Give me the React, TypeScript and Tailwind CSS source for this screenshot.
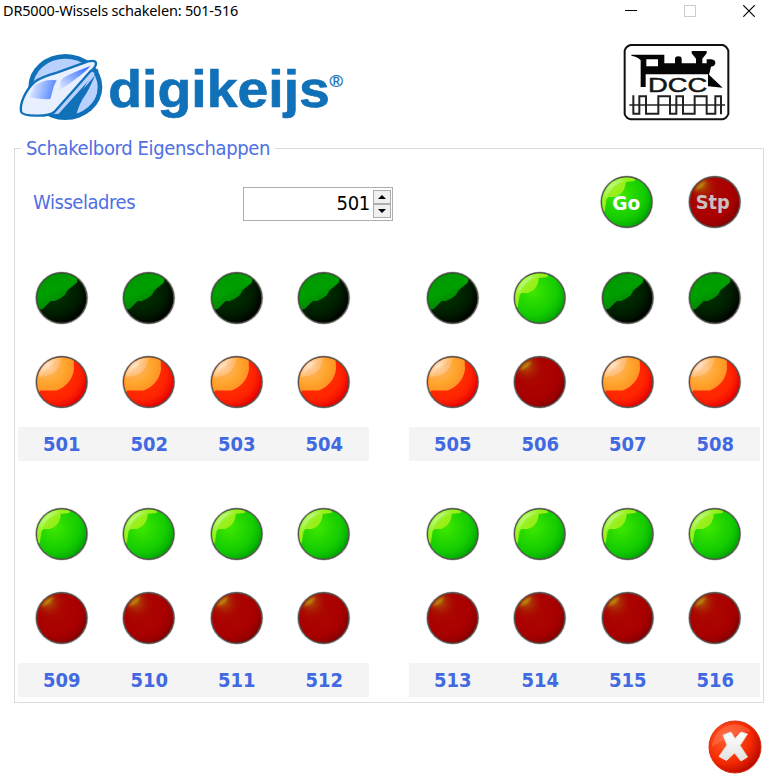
import React from "react";

type LampKind = "darkGreen" | "orange" | "green" | "red";

const base: Record<LampKind, [string, string, string]> = {
  darkGreen: ["#003a00", "#001c00", "#000000"],
  orange: ["#ff3a00", "#ff2400", "#e80000"],
  green: ["#3fe800", "#14cc00", "#00a800"],
  red: ["#ac0800", "#a80000", "#8c0000"],
};

function Lamp({ kind, label }: { kind: LampKind; label?: string }) {
  const id = React.useId();
  const [a, b, c] = base[kind];
  return (
    <svg width="54" height="54" viewBox="0.3 0 54 54" className="block shrink-0">
      <defs>
        <radialGradient id={id + "b"} cx="0.36" cy="0.36" r="0.72">
          <stop offset="0" stopColor={a} />
          <stop offset="0.68" stopColor={b} />
          <stop offset="1" stopColor={c} />
        </radialGradient>
        <clipPath id={id + "c"}>
          <circle cx="27" cy="27" r="24.6" />
        </clipPath>
        <radialGradient id={id + "o"} gradientUnits="userSpaceOnUse" cx="13" cy="11" r="30">
          <stop offset="0" stopColor="#ffd0a0" />
          <stop offset="0.3" stopColor="#ffb050" />
          <stop offset="0.6" stopColor="#ffa52c" />
          <stop offset="1" stopColor="#ff8a22" />
        </radialGradient>
        <linearGradient id={id + "d"} x1="0.2" y1="0" x2="0.7" y2="1">
          <stop offset="0" stopColor="#009400" />
          <stop offset="0.5" stopColor="#00a000" />
          <stop offset="1" stopColor="#007800" />
        </linearGradient>
        <linearGradient id={id + "g"} x1="0" y1="0" x2="1" y2="1">
          <stop offset="0" stopColor="#a8f860" />
          <stop offset="0.45" stopColor="#98f018" />
          <stop offset="1" stopColor="#7cee08" />
        </linearGradient>
        <radialGradient id={id + "r"} gradientUnits="userSpaceOnUse" cx="14" cy="11" r="18">
          <stop offset="0" stopColor="#b05c08" />
          <stop offset="1" stopColor="#a80000" stopOpacity="0" />
        </radialGradient>
        <filter id={id + "s"} x="-50%" y="-50%" width="200%" height="200%">
          <feGaussianBlur stdDeviation="0.9" />
        </filter>
      </defs>
      <circle cx="27" cy="27" r="26.6" fill="#999" opacity="0.6" />
      <circle cx="27" cy="27" r="25.9" fill="#54524e" />
      <circle cx="27" cy="27" r="24.6" fill={`url(#${id}b)`} />
      <g clipPath={`url(#${id}c)`}>
        {kind === "darkGreen" && (
          <path d="M0 39 L7.7 38.3 L12 34 L16 30 L20 30 L25 27.7 L30 24.3 L33 19 L37 16 L42.7 11 L42 0 H0Z" fill={`url(#${id}d)`} />
        )}
        {kind === "orange" && (
          <>
            <path d="M3 38 L6 35.6 H22 C31 32 38 25 39.3 14 L39 5 L30 0 H0 V38Z" fill={`url(#${id}o)`} />
            <path d="M5 22 Q15 21 20 17 Q24 14 27 3 H12 L3 13Z" fill="#ffe0cc" opacity="0.3" />
            <path d="M5 23 C6 14 13 6 23 4.5 C16 8 9 14 5 23Z" fill="#fff" opacity="0.6" filter={`url(#${id}s)`} />
          </>
        )}
        {kind === "green" && (
          <>
            <path d="M2 38 L5 36 L7 24 L9 22 H15 C22 20 26 14 26 7 L35 6 L35 0 H0Z" fill={`url(#${id}g)`} />
            <path d="M4.5 25 C6 13 14 5 26 4.5 C16 7 8 14 4.5 25Z" fill="#dfffdf" opacity="0.8" filter={`url(#${id}s)`} />
          </>
        )}
        {kind === "red" && (
          <>
            <circle cx="14" cy="11" r="18" fill={`url(#${id}r)`} />
            <path d="M7 16 Q11 8 19 6 Q16 12 7 16Z" fill="#b88c10" filter={`url(#${id}s)`} />
          </>
        )}
        <path d="M50 19 A24 24 0 0 1 21 50.5 A26 26 0 0 0 50 19Z" fill={kind === "darkGreen" ? "#000" : kind === "green" ? "#008c00" : kind === "red" ? "#6c0000" : "#c40000"} opacity="0.45" filter={`url(#${id}s)`} />
      </g>
      {label && (
        <text
          x={label === "Go" ? 26.6 : 25}
          y={label === "Go" ? 34.5 : 33.5}
          textAnchor="middle"
          fontFamily="'DejaVu Sans Condensed','DejaVu Sans',sans-serif"
          fontWeight="700"
          fontStretch="condensed"
          fontSize="20"
          textLength={label === "Go" ? 28 : 34}
          lengthAdjust="spacingAndGlyphs"
          fill={label === "Go" ? "#ffffff" : "#c8c0c4"}
        >
          {label}
        </text>
      )}
    </svg>
  );
}

function Brand() {
  return (
    <svg width="330" height="76" viewBox="16 50 330 76" className="block">
      <defs>
        <linearGradient id="window-front" x1="0" y1="0.3" x2="1" y2="0.5">
          <stop offset="0" stopColor="#eaf1ff" />
          <stop offset="1" stopColor="#4c82ff" />
        </linearGradient>
        <linearGradient id="window-side" x1="0" y1="1" x2="1" y2="0">
          <stop offset="0" stopColor="#e8f0ff" />
          <stop offset="1" stopColor="#2864ff" />
        </linearGradient>
      </defs>
      <g transform="translate(10 45) scale(0.33333)">
        <ellipse cx="166" cy="126" rx="111" ry="99" fill="#1070b8" />
        <ellipse cx="166" cy="126" rx="97" ry="85" fill="#b9d1ff" />
        <path d="M128 208 L262 70 Q272 92 253 84 Q215 120 198 208 Q160 221 128 208Z" fill="#1070b8" />
        <path d="M157 206 L256 90 Q232 142 201 206Z" fill="#1070b8" />
        <path d="M200 205 Q210 162 255 113 Q278 168 200 205Z" fill="#b9d1ff" />
        <path d="M127 208 L249 80 L254 86 L146 206Z" fill="#b9d1ff" />
        <path d="M33 200 C29 175 45 137 75 110 Q91 97 143 82 L232 50 Q258 44 258 55 Q258 68 240 80 L133 201 Q120 212 83 212 Q38 213 33 200Z" fill="#e8f0ff" stroke="#1070b8" strokeWidth="7" strokeLinejoin="round" />
        <path d="M72 122 Q103 101 140 106 L132 122 L121 162 Q88 164 58 157Z" fill="url(#window-front)" />
        <path d="M153 106 Q160 93 241 63 Q221 88 147 137Z" fill="url(#window-side)" />
      </g>
      <text x="108.3" y="107.4" fontFamily="'Liberation Sans',Arial,sans-serif" fontWeight="700" fontSize="52" textLength="221.5" lengthAdjust="spacingAndGlyphs" fill="#1070b8" stroke="#1070b8" strokeWidth="0.7">digikeijs</text>
      <text x="329.4" y="86.6" fontFamily="'Liberation Sans',Arial,sans-serif" fontSize="17" textLength="13.5" lengthAdjust="spacingAndGlyphs" fill="#1070b8" stroke="#1070b8" strokeWidth="0.3">®</text>
    </svg>
  );
}

function DccLogo() {
  return (
    <svg width="112" height="84" viewBox="30 120 336 252" className="block">
      <path d="M62 135 H338 Q350 138 355 152 V342 Q350 355 338 358 H62 Q48 355 44 342 V152 Q48 138 62 135Z" fill="#fff" stroke="#111" strokeWidth="6" strokeLinejoin="round" />
      <path fillRule="evenodd" d="M64 164 H163 V190 H195 V176 Q196 169 205 169 Q214 169 215 176 V190 H258 V176 L245 160 V153 H290 V160 L277 176 V190 H290 V178 H304 Q317 180 316 190 Q314 200 303 200 L297 224 L338 263 L294 259 V223 H107 V261 H92 V181 Q84 170 64 167Z M109 178 V199 H144 V178Z" fill="#050505" />
      <text x="114" y="276" fontFamily="'Liberation Sans',Arial,sans-serif" fontSize="62" textLength="178" lengthAdjust="spacingAndGlyphs" fill="#151515" stroke="#151515" strokeWidth="1.5">DCC</text>
      <path d="M70 286 V341 H88 V289 H108 V341 H145 V289 H180 V341 H199 V289 H219 V341 H254 V289 H290 V341 H316 V289 H333 V343" fill="none" stroke="#222" strokeWidth="6" />
      <path d="M58 315 H345" stroke="#222" strokeWidth="4" />
    </svg>
  );
}

const tahoma = "font-['DejaVu_Sans_Condensed','DejaVu_Sans',sans-serif]";

function Bank({ start, tops, bottoms }: { start: number; tops: LampKind[]; bottoms: LampKind[] }) {
  return (
    <section className="w-[351px]">
      <div className="grid w-[350px] grid-cols-4 justify-items-center gap-y-[30px]">
        {tops.map((k, i) => <Lamp key={"t" + i} kind={k} />)}
        {bottoms.map((k, i) => <Lamp key={"b" + i} kind={k} />)}
      </div>
      <div className="mt-[18px] grid h-[34px] grid-cols-4 items-center bg-[#f4f4f4] pr-px text-center text-xl font-bold text-[#4169e1]">
        {tops.map((_, i) => <span key={i}>{start + i}</span>)}
      </div>
    </section>
  );
}

const four = (k: LampKind): LampKind[] => [k, k, k, k];

export default function App() {
  return (
    <main className={`h-[779px] w-[775px] overflow-hidden bg-white ${tahoma}`}>
      <header className="flex h-[22px] items-start justify-between pl-[3px] pr-[20px]">
        <h1 className="whitespace-nowrap font-['Noto_Sans',sans-serif] text-[14.5px] leading-[20px] tracking-[-0.18px] text-black">DR5000-Wissels schakelen: 501-516</h1>
        <div className="flex gap-[47px] pt-[5px]">
          <svg width="12" height="12" shapeRendering="crispEdges"><path d="M0 5.5H12" stroke="#000" /></svg>
          <svg width="12" height="12" shapeRendering="crispEdges"><path d="M.5 .5H11.5V11.5H.5Z" fill="none" stroke="#ccc" /></svg>
          <svg width="12" height="12"><path d="M.3 .3L11.7 11.7M11.7 .3L.3 11.7" stroke="#000" strokeWidth="1.2" /></svg>
        </div>
      </header>
      <div className="flex h-[115px] justify-between pl-4 pr-[43px]">
        <div className="pt-7"><Brand /></div>
        <div className="pt-[18px]"><DccLogo /></div>
      </div>
      <fieldset className="ml-[14px] h-[566px] w-[749px] border border-[#dcdcdc] px-[3px]">
        <legend className="ml-[3px] h-[23px] whitespace-nowrap px-[5px] text-[20px] leading-[23px] tracking-[-0.38px] text-[#4f6fe3]">Schakelbord Eigenschappen</legend>
        <div className="mt-[15px] flex h-[54px] items-center pl-[15px] pr-[17px]">
          <label className="w-[210px] text-[20px] tracking-[-0.45px] text-[#4f6fe3]">Wisseladres</label>
          <div className="mt-1 flex h-[34px] w-[150px] items-center justify-end border border-[#abadb3] bg-white pr-[1px]">
            <span className="-mt-[3px] pr-[3px] text-[20px] leading-none tracking-[-0.3px] text-black">501</span>
            <div className="flex h-[28px] w-[18px] flex-col">
              <button className="flex flex-1 items-center justify-center border border-[#adadad] bg-[#f0f0f0]"><svg width="8" height="4"><path d="M4 0L8 4H0Z" /></svg></button>
              <button className="flex flex-1 items-center justify-center border border-[#adadad] bg-[#f0f0f0]"><svg width="8" height="4"><path d="M4 4L8 0H0Z" /></svg></button>
            </div>
          </div>
          <div className="ml-auto mr-[1px] flex gap-[34px]">
            <Lamp kind="green" label="Go" />
            <Lamp kind="red" label="Stp" />
          </div>
        </div>
        <div className="mt-[42px] flex gap-10">
          <Bank start={501} tops={four("darkGreen")} bottoms={four("orange")} />
          <Bank start={505} tops={["darkGreen", "green", "darkGreen", "darkGreen"]} bottoms={["orange", "red", "orange", "orange"]} />
        </div>
        <div className="mt-[46px] flex gap-10">
          <Bank start={509} tops={four("green")} bottoms={four("red")} />
          <Bank start={513} tops={four("green")} bottoms={four("red")} />
        </div>
      </fieldset>
      <footer className="flex justify-end pr-[13px] pt-[17px]">
        <svg width="54" height="54" viewBox="0 0 54 54">
          <defs>
            <radialGradient id="close-red" cx=".35" cy=".35" r=".7">
              <stop offset="0" stopColor="#ff6030" /><stop offset=".65" stopColor="#f52a00" /><stop offset="1" stopColor="#b80800" />
            </radialGradient>
            <linearGradient id="close-x" x1="0" y1="0" x2="0" y2="1">
              <stop offset="0" stopColor="#fff" /><stop offset="1" stopColor="#e2e2e2" />
            </linearGradient>
          </defs>
          <circle cx="27" cy="27" r="26" fill="url(#close-red)" stroke="#d83010" />
          <path d="M4 27 A23 23 0 0 1 43 11 Q23 14 4 27Z" fill="#ff9070" opacity=".35" />
          <path d="M15 15 L23 12 L27 18.5 L33 12 L39.5 14 L32 25.5 L39.5 37 L33 41 L26.5 33 L18.5 40.5 L11 36.5 L19 25Z" fill="url(#close-x)" stroke="#e8d8d4" strokeWidth="1" strokeLinejoin="round" />
        </svg>
      </footer>
    </main>
  );
}
